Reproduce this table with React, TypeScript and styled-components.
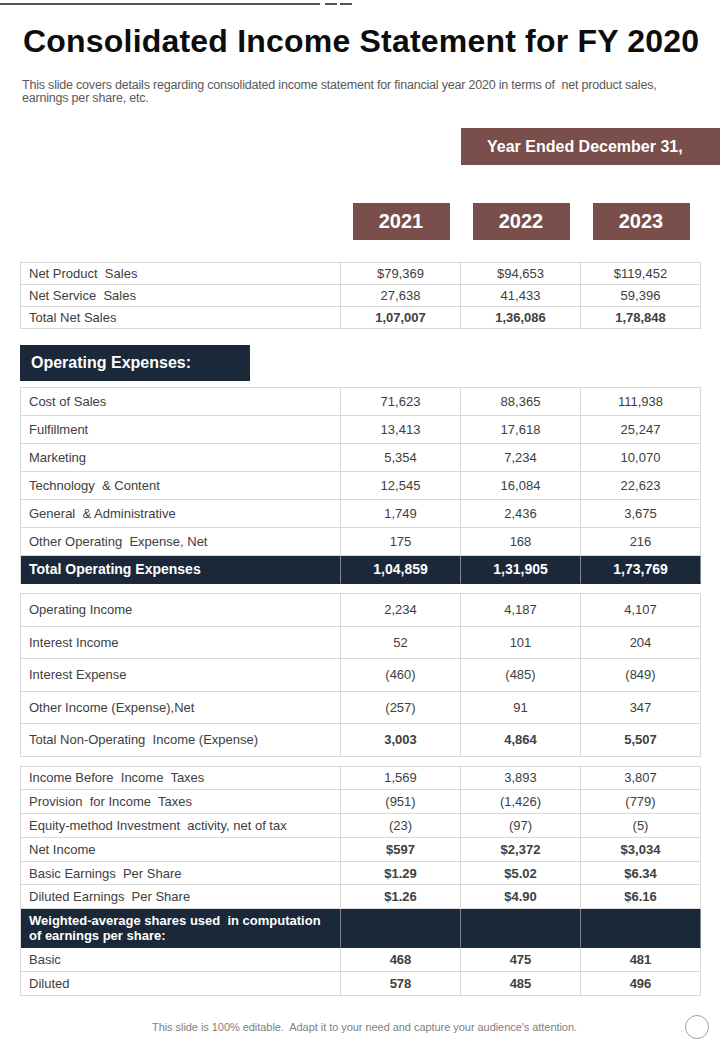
import React from "react";
import styled, { createGlobalStyle } from "styled-components";

const Global = createGlobalStyle`
  html, body { margin: 0; padding: 0; background: #fff; }
  body { font-family: "Liberation Sans", Arial, sans-serif; }
  * { box-sizing: border-box; }
`;

const BROWN = "#7a4e4a";
const NAVY = "#1b2839";
const LINE = "#d9d9d9";
const TEXT = "#404040";

const Page = styled.div`
  width: 720px;
  height: 1040px;
  overflow: hidden;
  background: #fff;
`;

const TopRule = styled.div`
  display: flex;
  padding-top: 3px;
  height: 5px;
`;

const RuleSeg = styled.span<{ $w: number; $gap?: number }>`
  display: block;
  width: ${(p) => p.$w}px;
  height: 2px;
  margin-left: ${(p) => p.$gap ?? 0}px;
  background: #5b514d;
`;

const Title = styled.h1`
  margin: 20px 0 0 23px;
  font: 700 32px/32px "Liberation Sans", Arial, sans-serif;
  letter-spacing: 0.2px;
  color: #0d0d0d;
  white-space: nowrap;
`;

const Subtitle = styled.p`
  margin: 22px 0 0 22px;
  font-size: 12.5px;
  line-height: 13px;
  letter-spacing: -0.2px;
  color: #595959;
  white-space: nowrap;
`;

const BannerRow = styled.div`
  display: flex;
  justify-content: flex-end;
  margin-top: 23px;
`;

const Banner = styled.div`
  width: 259px;
  height: 37px;
  padding-left: 26px;
  display: flex;
  align-items: center;
  background: ${BROWN};
  color: #fff;
  font-weight: 700;
  font-size: 16px;
`;

const YearGrid = styled.div`
  display: grid;
  grid-template-columns: 320px repeat(3, 120px);
  margin: 38px 0 0 21px;
`;

const YearBox = styled.div<{ $col: number }>`
  grid-column: ${(p) => p.$col};
  justify-self: center;
  width: 97px;
  height: 37px;
  display: flex;
  align-items: center;
  justify-content: center;
  background: ${BROWN};
  color: #fff;
  font-weight: 700;
  font-size: 20px;
`;

const Table = styled.div<{ $mt: number }>`
  margin: ${(p) => p.$mt}px 0 0 20px;
  width: 681px;
  border-top: 1px solid ${LINE};
  border-left: 1px solid ${LINE};
`;

const Row = styled.div<{ $h: number; $dark?: boolean }>`
  display: grid;
  grid-template-columns: 320px repeat(3, 120px);
  height: ${(p) => p.$h}px;
  background: ${(p) => (p.$dark ? NAVY : "#fff")};
  color: ${(p) => (p.$dark ? "#fff" : TEXT)};
`;

const Cell = styled.div<{ $label?: boolean; $bold?: boolean; $dark?: boolean; $size?: number }>`
  display: flex;
  align-items: center;
  justify-content: ${(p) => (p.$label ? "flex-start" : "center")};
  padding-left: ${(p) => (p.$label ? 8 : 0)}px;
  border-right: 1px solid ${(p) => (p.$dark ? "#7d858f" : LINE)};
  border-bottom: 1px solid ${(p) => (p.$dark ? NAVY : LINE)};
  font-size: ${(p) => p.$size ?? 13}px;
  line-height: 15px;
  font-weight: ${(p) => (p.$bold ? 700 : 400)};
  white-space: ${(p) => (p.$label ? "pre" : "normal")};
`;

const SectionHead = styled.div`
  margin: 16px 0 0 20px;
  width: 230px;
  height: 36px;
  padding-left: 11px;
  display: flex;
  align-items: center;
  background: ${NAVY};
  color: #fff;
  font-weight: 700;
  font-size: 16px;
`;

const Footer = styled.div`
  display: grid;
  grid-template-columns: 1fr auto 1fr;
  align-items: center;
  padding-top: 19px;
`;

const FooterText = styled.p`
  grid-column: 2;
  margin: 0 0 0 9px;
  font-size: 11px;
  letter-spacing: -0.05px;
  color: #7f7f7f;
`;

const Circle = styled.span`
  justify-self: end;
  margin-right: 11px;
  width: 24px;
  height: 24px;
  border: 1px solid #a0a0a0;
  border-radius: 50%;
`;

type Line = { label: React.ReactNode; v: string[]; bold?: boolean; dark?: boolean; h?: number; size?: number };

const t1: Line[] = [
  { label: "Net Product  Sales", v: ["$79,369", "$94,653", "$119,452"] },
  { label: "Net Service  Sales", v: ["27,638", "41,433", "59,396"] },
  { label: "Total Net Sales", v: ["1,07,007", "1,36,086", "1,78,848"], bold: true },
];

const t2: Line[] = [
  { label: "Cost of Sales", v: ["71,623", "88,365", "111,938"] },
  { label: "Fulfillment", v: ["13,413", "17,618", "25,247"] },
  { label: "Marketing", v: ["5,354", "7,234", "10,070"] },
  { label: "Technology  & Content", v: ["12,545", "16,084", "22,623"] },
  { label: "General  & Administrative", v: ["1,749", "2,436", "3,675"] },
  { label: "Other Operating  Expense, Net", v: ["175", "168", "216"] },
  { label: "Total Operating Expenses", v: ["1,04,859", "1,31,905", "1,73,769"], bold: true, dark: true, size: 14 },
];

const t3: Line[] = [
  { label: "Operating Income", v: ["2,234", "4,187", "4,107"] },
  { label: "Interest Income", v: ["52", "101", "204"] },
  { label: "Interest Expense", v: ["(460)", "(485)", "(849)"] },
  { label: "Other Income (Expense),Net", v: ["(257)", "91", "347"] },
  { label: "Total Non-Operating  Income (Expense)", v: ["3,003", "4,864", "5,507"], bold: true },
];

const t4: Line[] = [
  { label: "Income Before  Income  Taxes", v: ["1,569", "3,893", "3,807"] },
  { label: "Provision  for Income  Taxes", v: ["(951)", "(1,426)", "(779)"] },
  { label: "Equity-method Investment  activity, net of tax", v: ["(23)", "(97)", "(5)"] },
  { label: "Net Income", v: ["$597", "$2,372", "$3,034"], bold: true },
  { label: "Basic Earnings  Per Share", v: ["$1.29", "$5.02", "$6.34"], bold: true },
  { label: "Diluted Earnings  Per Share", v: ["$1.26", "$4.90", "$6.16"], bold: true },
  {
    label: "Weighted-average shares used  in computation\nof earnings per share:",
    v: ["", "", ""],
    dark: true,
    h: 39,
    bold: true,
  },
  { label: "Basic", v: ["468", "475", "481"], bold: true, h: 24 },
  { label: "Diluted", v: ["578", "485", "496"], bold: true, h: 24 },
];

function DataTable({ rows, rowH, mt }: { rows: Line[]; rowH: number; mt: number }) {
  return (
    <Table $mt={mt}>
      {rows.map((r, i) => (
        <Row key={i} $h={r.h ?? rowH} $dark={r.dark}>
          <Cell $label $dark={r.dark} $bold={r.dark} $size={r.size}>
            {r.label}
          </Cell>
          {r.v.map((v, j) => (
            <Cell key={j} $dark={r.dark} $bold={r.bold} $size={r.size}>
              {v}
            </Cell>
          ))}
        </Row>
      ))}
    </Table>
  );
}

export default function App() {
  return (
    <>
      <Global />
      <Page>
        <TopRule>
          <RuleSeg $w={320} />
          <RuleSeg $w={12} $gap={5} />
          <RuleSeg $w={12} $gap={3} />
        </TopRule>
        <Title>Consolidated Income Statement for FY 2020</Title>
        <Subtitle>
          This slide covers details regarding consolidated income statement for financial year 2020 in terms of&nbsp; net product sales,
          <br />
          earnings per share, etc.
        </Subtitle>
        <BannerRow>
          <Banner>Year Ended December 31,</Banner>
        </BannerRow>
        <YearGrid>
          <YearBox $col={2}>2021</YearBox>
          <YearBox $col={3}>2022</YearBox>
          <YearBox $col={4}>2023</YearBox>
        </YearGrid>
        <DataTable rows={t1} rowH={22} mt={22} />
        <SectionHead>Operating Expenses:</SectionHead>
        <DataTable rows={t2} rowH={28} mt={6} />
        <DataTable rows={t3} rowH={32.5} mt={9} />
        <DataTable rows={t4} rowH={23.8} mt={9} />
        <Footer>
          <FooterText>This slide is 100% editable.&nbsp; Adapt it to your need and capture your audience's attention.</FooterText>
          <Circle />
        </Footer>
      </Page>
    </>
  );
}
